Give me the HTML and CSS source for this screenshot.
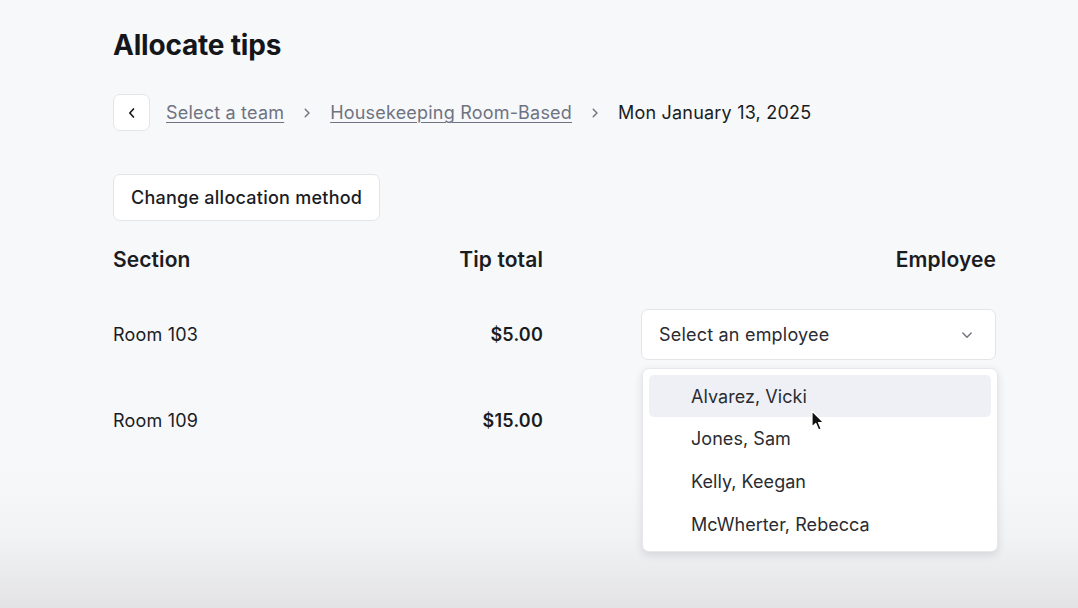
FILE: index.html
```html
<!DOCTYPE html>
<html lang="en">
<head>
<meta charset="utf-8">
<title>Allocate tips</title>
<link rel="stylesheet" href="styles.css">
</head>
<body>
<main class="page">
  <h1 class="title">Allocate tips</h1>

  <nav class="crumbs">
    <button class="back-btn" aria-label="Back">
      <svg width="14" height="14" viewBox="0 0 14 14"><path d="M8.5 3 L4.8 7 L8.5 11" fill="none" stroke="#1b1c1f" stroke-width="1.7" stroke-linecap="round" stroke-linejoin="round"/></svg>
    </button>
    <a class="crumb-link" href="#">Select a team</a>
    <svg class="crumb-sep" width="12" height="12" viewBox="0 0 12 12"><path d="M4.2 2.2 L8 6 L4.2 9.8" fill="none" stroke="#6f737b" stroke-width="1.4" stroke-linecap="round" stroke-linejoin="round"/></svg>
    <a class="crumb-link" href="#">Housekeeping Room-Based</a>
    <svg class="crumb-sep" width="12" height="12" viewBox="0 0 12 12"><path d="M4.2 2.2 L8 6 L4.2 9.8" fill="none" stroke="#6f737b" stroke-width="1.4" stroke-linecap="round" stroke-linejoin="round"/></svg>
    <span class="crumb-current">Mon January 13, 2025</span>
  </nav>

  <button class="outline-btn">Change allocation method</button>

  <section class="alloc-table">
    <div class="th">Section</div>
    <div class="th num">Tip total</div>
    <div class="th num">Employee</div>

    <div class="td">Room 103</div>
    <div class="td num strong">$5.00</div>
    <div class="td picker">
      <div class="select">
        <span>Select an employee</span>
        <svg width="14" height="14" viewBox="0 0 14 14"><path d="M2.8 5 L7 9.2 L11.2 5" fill="none" stroke="#6f737b" stroke-width="1.4" stroke-linecap="round" stroke-linejoin="round"/></svg>
      </div>
      <ul class="menu">
        <li class="option active">Alvarez, Vicki</li>
        <li class="option">Jones, Sam</li>
        <li class="option">Kelly, Keegan</li>
        <li class="option">McWherter, Rebecca</li>
      </ul>
      <svg class="pointer" width="14" height="22" viewBox="0 0 14 22"><path d="M1 1 L1 17 L4.8 13.4 L7.6 20 L10.2 18.9 L7.5 12.5 L12.6 12.5 Z" fill="#111" stroke="#fff" stroke-width="1.2" stroke-linejoin="round"/></svg>
    </div>

    <div class="td">Room 109</div>
    <div class="td num strong">$15.00</div>
    <div class="td"></div>
  </section>
</main>
</body>
</html>
```

FILE: styles.css
```css
html, body {
  margin: 0;
  height: 100%;
}

body {
  font-family: Inter, "Noto Sans", sans-serif;
  color: #1b1c1f;
  background: linear-gradient(to bottom, #f7f8fa 0, #f7f8fa 470px, #f1f2f4 540px, #e3e3e5 608px);
}

.page {
  width: 883px;
  padding: 28px 0 0 113px;
}

.title {
  margin: 0;
  font-size: 28px;
  line-height: 34px;
  font-weight: 700;
  letter-spacing: -0.2px;
  color: #15161a;
}

.crumbs {
  display: flex;
  align-items: center;
  margin-top: 32px;
  height: 37px;
  font-size: 18px;
  letter-spacing: 0.2px;
}

.back-btn {
  width: 37px;
  height: 37px;
  display: flex;
  align-items: center;
  justify-content: center;
  padding: 0;
  margin-right: 16px;
  background: #fff;
  border: 1px solid #e3e5e9;
  border-radius: 7px;
}

.crumb-link {
  color: #6e7382;
  text-decoration: underline;
  text-underline-offset: 3px;
  text-decoration-thickness: 1px;
}

.crumb-sep {
  margin: 0 17px;
}

.crumb-current {
  color: #1b1c1f;
}

.outline-btn {
  display: block;
  margin-top: 43px;
  height: 47px;
  padding: 0 17px;
  font-family: inherit;
  font-size: 18px;
  font-weight: 500;
  letter-spacing: 0.25px;
  color: #1b1c1f;
  background: #fff;
  border: 1px solid #e3e5e9;
  border-radius: 7px;
}

.alloc-table {
  display: grid;
  grid-template-columns: 1fr 1fr 355px;
  grid-template-rows: 30px 51px 51px;
  column-gap: 98px;
  row-gap: 35px;
  margin-top: 23px;
  font-size: 18px;
  letter-spacing: 0.2px;
}

.th {
  display: flex;
  align-items: center;
  font-size: 21px;
  font-weight: 600;
  letter-spacing: 0.1px;
}

.td {
  display: flex;
  align-items: center;
}

.num {
  justify-content: flex-end;
}

.strong {
  font-weight: 600;
}

.picker {
  position: relative;
}

.select {
  flex: 1;
  height: 51px;
  box-sizing: border-box;
  display: flex;
  align-items: center;
  justify-content: space-between;
  padding: 0 21px 0 17px;
  color: #2a2c31;
  background: #fff;
  border: 1px solid #e3e5e9;
  border-radius: 7px;
}

.menu {
  position: absolute;
  top: 59px;
  left: 1px;
  width: 356px;
  box-sizing: border-box;
  margin: 0;
  padding: 6px 6px 5px;
  list-style: none;
  letter-spacing: 0.05px;
  background: #fff;
  border: 1px solid #e6e8ec;
  border-radius: 7px;
  box-shadow: 0 3px 8px rgba(20, 24, 35, 0.12);
}

.option {
  height: 43px;
  display: flex;
  align-items: center;
  padding-left: 42px;
  color: #2a2c31;
  border-radius: 5px;
}

.option.active {
  height: 42px;
  background: #eef0f5;
}

.pointer {
  position: absolute;
  top: 101px;
  left: 170px;
}
```
